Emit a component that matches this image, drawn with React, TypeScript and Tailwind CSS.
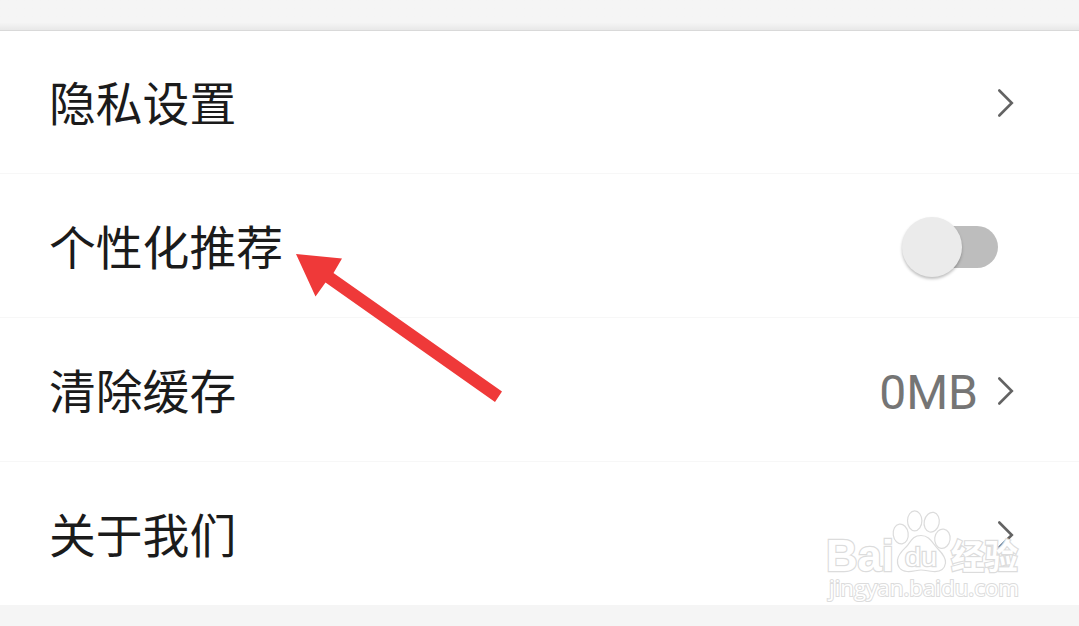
import type { ReactNode } from "react";

interface SettingRowProps {
  label: string;
  children: ReactNode;
  className: string;
}

const Chevron = () => (
  <svg width="18" height="30" viewBox="0 0 18 30" fill="none">
    <path d="M2.300 2.500L14.800 15L2.300 27.500" stroke="#636363" strokeWidth="2.600" strokeLinecap="round" />
  </svg>
);

const Toggle = () => (
  <div className="flex h-[60px] w-24 items-center">
    <div className="z-10 size-[60px] shrink-0 rounded-full bg-[#ebebeb] shadow-[0_2px_3px_rgba(0,0,0,0.25)]" />
    <div className="-ml-[30px] h-[42px] w-[66px] shrink-0 rounded-r-full bg-[#bdbdbd]" />
  </div>
);

const SettingRow = ({ label, children, className }: SettingRowProps) => (
  <div className={`flex items-center justify-between border-[#f7f7f7] pt-0.5 pl-[49px] pr-[64px] ${className}`}>
    <span className="pt-[5px] text-[46.8px] leading-none text-[#1b1b1b]">{label}</span>
    {children}
  </div>
);

const Arrow = () => (
  <svg className="absolute left-[290px] top-[245px]" width="220" height="165" viewBox="290 245 220 165">
    <path d="M296 254L342 258.500L333.500 273L502 391.500L495 402L325.500 282.500L315.500 296.500Z" fill="#ef3939" />
  </svg>
);

const Watermark = () => (
  <svg
    className="absolute left-[820px] top-[505px]"
    width="210"
    height="115"
    viewBox="820 505 210 115"
    fill="#ffffff"
    stroke="#dcdcdc"
    strokeWidth="1.200"
  >
    <ellipse cx="900.7" cy="534" rx="7.500" ry="10" transform="rotate(-8 900.7 534)" />
    <ellipse cx="914.7" cy="520.800" rx="7.200" ry="10" />
    <ellipse cx="931.7" cy="522.200" rx="7.500" ry="10" transform="rotate(12 931.7 522.2)" />
    <ellipse cx="942.400" cy="538.700" rx="7.700" ry="9.700" transform="rotate(8 942.4 538.7)" />
    <path d="M921 535.500C930 535.500 932 543 938 549C943 554 946 558 945.500 563C944.500 570 939 572 933 571.500C928 571 925 570 921 570C917 570 912 572 907 571.500C901 571 897 567 897.500 560C898 554 903 550 907 546C911 541 913 535.500 921 535.500Z" />
    <g fontFamily='"Liberation Sans", Arial, sans-serif' strokeWidth="2.400" paintOrder="stroke">
      <text x="826" y="570.500" fontSize="44" fontWeight="700" textLength="68" lengthAdjust="spacingAndGlyphs">Bai</text>
      <text x="905" y="565.500" fontSize="26" fontWeight="400" textLength="32" lengthAdjust="spacingAndGlyphs">du</text>
    </g>
    <g fontFamily='"Noto Sans CJK SC", sans-serif' strokeWidth="2.400" paintOrder="stroke">
      <text x="951" y="568.500" fontSize="34" fontWeight="700" textLength="67" lengthAdjust="spacingAndGlyphs">经验</text>
    </g>
    <g fontFamily='"Open Sans", sans-serif' strokeWidth="2" paintOrder="stroke">
      <text x="829" y="596" fontSize="22" fontWeight="400" textLength="190" lengthAdjust="spacingAndGlyphs">jingyan.baidu.com</text>
    </g>
  </svg>
);

export default function App() {
  return (
    <div className="relative h-[626px] w-[1079px] overflow-hidden bg-[#f5f5f5] font-['Roboto','Noto_Sans_CJK_SC',sans-serif]">
      <div className="h-[31px] border-b border-[#d9d9d9] bg-linear-to-b from-[#f5f5f5] from-75% to-[#e8e8e8]" />
      <div className="bg-white">
        <SettingRow label="隐私设置" className="h-[143px] border-b">
          <Chevron />
        </SettingRow>
        <SettingRow label="个性化推荐" className="h-36 border-b">
          <div className="mr-[17px]">
            <Toggle />
          </div>
        </SettingRow>
        <SettingRow label="清除缓存" className="h-36 border-b">
          <div className="flex items-center gap-[19px]">
            <span className="pt-1 text-[48px] leading-none text-[#757575]">0MB</span>
            <Chevron />
          </div>
        </SettingRow>
        <SettingRow label="关于我们" className="h-[143px]">
          <Chevron />
        </SettingRow>
      </div>
      <Arrow />
      <Watermark />
    </div>
  );
}
